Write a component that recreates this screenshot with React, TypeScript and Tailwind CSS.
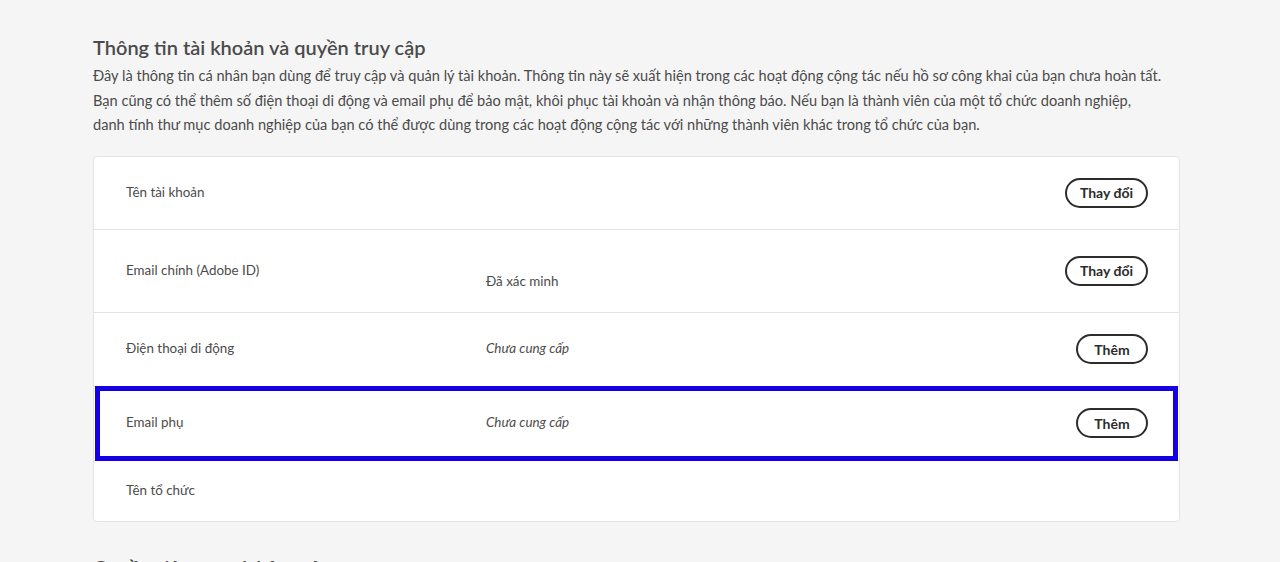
import React from "react";

const rows = [
  { label: "Tên tài khoản", value: null, action: "Thay đổi", h: "h-[73px]" },
  { label: "Email chính (Adobe ID)", value: "verified", action: "Thay đổi", h: "h-[83px]" },
  { label: "Điện thoại di động", value: "Chưa cung cấp", action: "Thêm", h: "h-[74px]" },
  { label: "Email phụ", value: "Chưa cung cấp", action: "Thêm", h: "h-[74px]", focus: true },
  { label: "Tên tổ chức", value: null, action: null, h: "h-[60px]" },
];

const AccountRow = ({ row, last }: any) => {
  return (
    <div
      className={`relative flex items-center pl-[32px] pr-[31px] ${row.h} ${
        last ? "" : "border-b border-[#e4e4e4]"
      }`}
    >
      {row.focus && (
        <div className="absolute left-[1px] right-[1px] top-[-1px] bottom-[-1px] border-[5px] border-[#1500e6]" />
      )}
      <div className="w-[360px] pb-[2px] text-[13.4px] leading-[20px] text-[#4b4b4b]">
        {row.label}
      </div>
      <div className="flex-1 pb-[2px] text-[13.4px] leading-[22px] text-[#4b4b4b]">
        {row.value === "verified" ? (
          <div className="flex flex-col">
            <span className="h-[23px]" />
            <span>Đã xác minh</span>
          </div>
        ) : row.value ? (
          <span className="italic">{row.value}</span>
        ) : null}
      </div>
      {row.action && (
        <button className="flex h-[30px] min-w-[72px] items-center justify-center rounded-full border-2 border-[#2c2c2c] px-[13px] text-[14px] font-bold text-[#2c2c2c]">
          {row.action}
        </button>
      )}
    </div>
  );
};

export default function App() {
  return (
    <div
      className="min-h-[562px] bg-[#f5f5f5] pt-[34px] pl-[93px] pr-[100px]"
      style={{ fontFamily: "Lato, 'Noto Sans', sans-serif" }}
    >
      <h2 className="text-[20px] leading-[26px] font-semibold text-[#4b4b4b]">
        Thông tin tài khoản và quyền truy cập
      </h2>
      <p className="mt-[4px] whitespace-nowrap text-[14.6px] leading-[24.5px] text-[#4b4b4b]">
        Đây là thông tin cá nhân bạn dùng để truy cập và quản lý tài khoản. Thông tin này sẽ xuất hiện trong các hoạt động cộng tác nếu hồ sơ công khai của bạn chưa hoàn tất.
        <br />
        Bạn cũng có thể thêm số điện thoại di động và email phụ để bảo mật, khôi phục tài khoản và nhận thông báo. Nếu bạn là thành viên của một tổ chức doanh nghiệp,
        <br />
        danh tính thư mục doanh nghiệp của bạn có thể được dùng trong các hoạt động cộng tác với những thành viên khác trong tổ chức của bạn.
      </p>
      <div className="mt-[18px] w-[1087px] rounded-[4px] border border-[#e4e4e4] bg-white">
        {rows.map((row, i) => (
          <AccountRow key={i} row={row} last={i === rows.length - 1} />
        ))}
      </div>
      <h2 className="mt-[32px] text-[20px] leading-[26px] font-semibold text-[#4b4b4b]">
        Quyền riêng tư và bảo mật
      </h2>
    </div>
  );
}
